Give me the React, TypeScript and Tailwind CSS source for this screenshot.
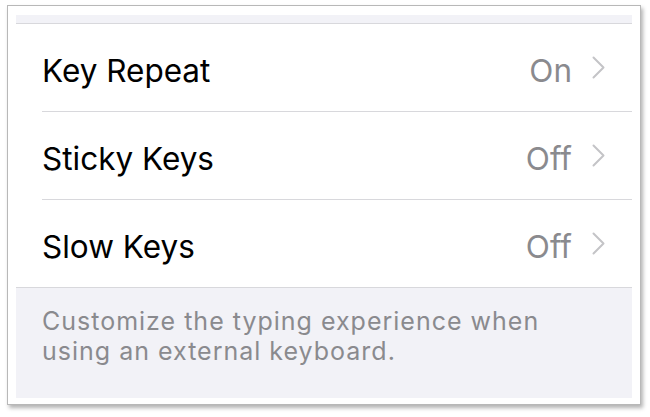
const rows = [
  { label: 'Key Repeat', value: 'On' },
  { label: 'Sticky Keys', value: 'Off' },
  { label: 'Slow Keys', value: 'Off' },
]

function Chevron() {
  return (
    <svg width="13" height="23" viewBox="0 0 13 23" fill="none" className="shrink-0">
      <path d="M1.5 1.5 L11.5 11.5 L1.5 21.5" stroke="#c4c4c7" strokeWidth="2" strokeLinecap="round" strokeLinejoin="round" />
    </svg>
  )
}

export default function App() {
  return (
    <div className="w-[650px] h-[417px] bg-white pt-[5px] pl-[7px] font-['Inter',sans-serif]">
      <div className="w-[634px] h-[400px] bg-white border border-[#b8b8b8] shadow-[2px_3px_4px_rgba(0,0,0,0.3)] pt-[9px] pl-[8px]">
        <div className="w-[616px] flex flex-col">
          <div className="h-[9px] bg-[#f2f2f7] border-b border-[#d8d8dc]" />
          {rows.map((r, i) => (
            <div key={r.label} className={`h-[88px] flex items-center pl-[26px] ${i === rows.length - 1 ? 'border-b border-[#d8d8dc]' : ''}`}>
              <div className={`h-full flex-1 flex items-center pr-[27px] ${i < rows.length - 1 ? 'border-b border-[#d8d8dc]' : ''}`}>
                <span className="flex-1 pt-[6px] text-[31.5px] leading-[38px] text-black">{r.label}</span>
                <span className="pt-[6px] text-[31.5px] leading-[38px] text-[#8a8a8e] mr-[20px]">{r.value}</span>
                <Chevron />
              </div>
            </div>
          ))}
          <div className="h-[110px] bg-[#f2f2f7] pl-[26px] pt-[18px] text-[25px] leading-[30px] tracking-[1px] text-[#8a8a8e]">
            Customize the typing experience when
            <br />
            using an external keyboard.
          </div>
        </div>
      </div>
    </div>
  )
}
